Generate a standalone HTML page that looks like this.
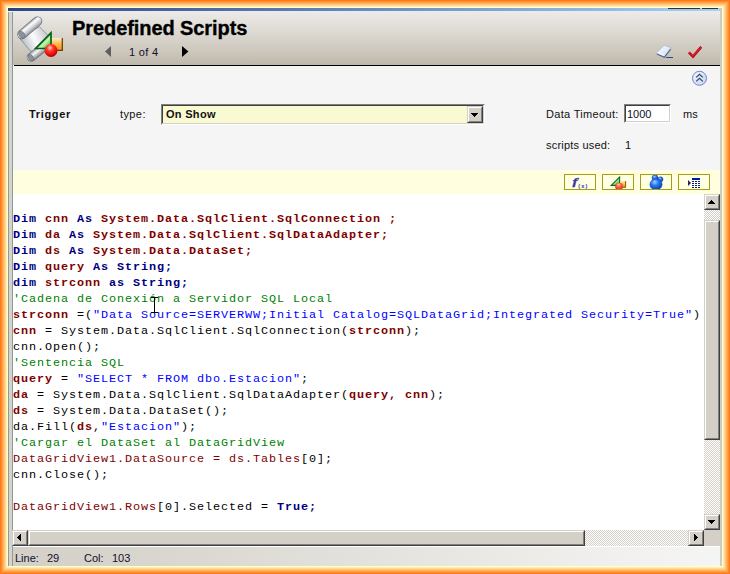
<!DOCTYPE html>
<html>
<head>
<meta charset="utf-8">
<title>Predefined Scripts</title>
<style>
html,body{margin:0;padding:0;}
body{width:730px;height:574px;overflow:hidden;position:relative;background:#f5f5f5;font-family:"Liberation Sans",sans-serif;font-size:11px;color:#000;}
.abs{position:absolute;}
/* glow frame */
.g{position:absolute;}
.gt{left:0;top:0;width:730px;height:8px;background:linear-gradient(to bottom,#ff7a16 0.5px,#ffffc8 7.5px);}
.gb{left:0;top:566px;width:730px;height:8px;background:linear-gradient(to top,#ff7a16 0.5px,#ffffc8 7.5px);}
.gl{left:0;top:0;width:8px;height:574px;background:linear-gradient(to right,#ff7a16 0.5px,#ffffc8 7.5px);clip-path:polygon(0 0,8px 8px,8px 566px,0 574px);}
.gr{left:722px;top:0;width:8px;height:574px;background:linear-gradient(to left,#ff7a16 0.5px,#ffffc8 7.5px);clip-path:polygon(8px 0,0 8px,0 566px,8px 574px);}
/* window chrome */
#topbar{left:8px;top:8px;width:712px;height:3px;background:linear-gradient(to right,#2a4488,#a8cff8);}
#lstrip{left:8px;top:12px;width:3px;height:554px;background:#d6d3cd;border-left:1px solid #8d9a9c;border-right:1px solid #8d9a9c;}
#rstrip{left:720px;top:8px;width:2px;height:558px;background:#cfccc5;}
#hdr{left:13px;top:11px;width:707px;height:54px;background:linear-gradient(to bottom,#edebe8 0%,#d8d4cc 50%,#c0b9ac 100%);}
#hline{left:14px;top:65px;width:706px;height:1px;background:#000;}
#title{left:72px;top:16px;letter-spacing:-0.08px;-webkit-text-stroke:0.35px #000;font-weight:bold;font-size:20px;line-height:24px;white-space:nowrap;color:#000;}
#pager{left:129px;top:46px;letter-spacing:0.3px;line-height:13px;white-space:nowrap;color:#10102a;}
.lbl{position:absolute;line-height:13px;white-space:nowrap;color:#111;}
#ystrip{left:13px;top:170px;width:707px;height:24px;background:#ffffe0;}
.tb{position:absolute;top:174px;width:30px;height:14px;border:1px solid #a39d18;background:#ffffe4;}
/* combo + input */
#combo{left:161px;top:104px;width:320px;height:17px;background:#fafad2;border-top:2px solid #404040;border-left:2px solid #404040;border-right:2px solid #fff;border-bottom:2px solid #fff;}
#combo:before{content:"";position:absolute;left:-2px;top:-2px;width:322px;height:19px;border-top:1px solid #808080;border-left:1px solid #808080;border-right:1px solid #fff;border-bottom:1px solid #fff;}
#combo:after{content:"";position:absolute;left:-1px;top:-1px;width:321px;height:18px;border-right:1px solid #d4d0c8;border-bottom:1px solid #d4d0c8;}
#cbtn{left:468px;top:106px;width:11px;height:13px;background:#d4d0c8;border-top:1px solid #fff;border-left:1px solid #fff;border-right:1px solid #808080;border-bottom:1px solid #808080;box-shadow:1px 1px 0 #404040;}
#inp{left:624px;top:104px;width:43px;height:15px;background:#fff;border-top:2px solid #404040;border-left:2px solid #404040;border-right:2px solid #d4d0c8;border-bottom:2px solid #d4d0c8;box-shadow:-0px -0px 0 #808080;}
#inp:before{content:"";position:absolute;left:-2px;top:-2px;width:45px;height:17px;border-top:1px solid #808080;border-left:1px solid #808080;border-right:1px solid #fff;border-bottom:1px solid #fff;}
/* code */
#code{left:13px;top:194px;width:691px;height:336px;background:#fff;overflow:hidden;}
#code pre{margin:0;position:absolute;left:0;top:17px;font-family:"Liberation Mono",monospace;font-size:11.8px;letter-spacing:0.92px;line-height:16px;color:#000;white-space:pre;}
.k{color:#000080;font-weight:bold;}
.v{color:#800000;font-weight:bold;}
.m{color:#800000;}
.c{color:#008000;}
.s{color:#0000ff;}
/* scrollbars */
.dither{background-color:#fff;background-image:conic-gradient(#d4d0c8 25%,#fff 0 50%,#d4d0c8 0 75%,#fff 0);background-size:2px 2px;}
.btn3d{position:absolute;background:#d4d0c8;box-sizing:border-box;border-top:1px solid #d4d0c8;border-left:1px solid #d4d0c8;border-right:1px solid #404040;border-bottom:1px solid #404040;}
.btn3d:before{content:"";position:absolute;left:0;top:0;right:0;bottom:0;border-top:1px solid #fff;border-left:1px solid #fff;border-right:1px solid #808080;border-bottom:1px solid #808080;}
#vs{left:704px;top:194px;width:16px;height:336px;}
#hs{left:13px;top:530px;width:691px;height:16px;}
#corner{left:704px;top:530px;width:16px;height:16px;background:#d4d0c8;}
#status{left:13px;top:546px;width:707px;height:20px;background:linear-gradient(to right,#d4d0c8 0%,#d9d6cf 20%,#e6e4df 55%,#f1f0ee 85%,#f5f5f4 100%);}
#status:before{content:"";position:absolute;left:0;top:0;width:100%;height:1px;background:#fff;}
</style>
</head>
<body>
<div class="abs" id="topbar"></div>
<div class="abs" style="left:668px;top:8px;width:32px;height:1px;background:#333"></div>
<div class="abs" style="left:702px;top:8px;width:16px;height:1px;background:#333"></div>
<div class="abs" id="lstrip"></div>
<div class="abs" id="rstrip"></div>
<div class="abs" id="hdr"></div>
<div class="abs" id="hline"></div>

<div class="abs" id="title">Predefined Scripts</div>
<div class="abs" id="pager">1 of 4</div>

<div class="lbl" style="left:29px;top:108px;font-weight:bold;letter-spacing:0.65px">Trigger</div>
<div class="lbl" style="left:120px;top:108px;letter-spacing:0.4px">type:</div>
<div class="abs" id="combo"></div>
<div class="btn3d" style="left:467px;top:106px;width:16px;height:17px"></div>
<div class="lbl" style="left:166px;top:108px;font-weight:bold;letter-spacing:0.3px">On Show</div>
<div class="lbl" style="left:546px;top:108px;letter-spacing:0.32px">Data Timeout:</div>
<div class="abs" id="inp"></div>
<div class="lbl" style="left:627px;top:108px;color:#10102a">1000</div>
<div class="lbl" style="left:683px;top:108px">ms</div>
<div class="lbl" style="left:546px;top:139px;letter-spacing:0.2px">scripts used:</div>
<div class="lbl" style="left:625px;top:139px">1</div>

<div class="abs" id="ystrip"></div>
<div class="tb" style="left:564px"></div>
<div class="tb" style="left:602px"></div>
<div class="tb" style="left:640px"></div>
<div class="tb" style="left:678px"></div>

<div class="abs" id="code"><pre><span class="k">Dim</span> <span class="v">cnn</span> <span class="k">As</span> <span class="v">System.Data.SqlClient.SqlConnection ;</span>
<span class="k">Dim</span> <span class="v">da</span> <span class="k">As</span> <span class="v">System.Data.SqlClient.SqlDataAdapter;</span>
<span class="k">Dim</span> <span class="v">ds</span> <span class="k">As</span> <span class="v">System.Data.DataSet;</span>
<span class="k">Dim</span> <span class="v">query</span> <span class="k">As String;</span>
<span class="k">dim</span> <span class="v">strconn</span> <span class="k">as String;</span>
<span class="c">'Cadena de Conexión a Servidor SQL Local</span>
<span class="v">strconn</span> =(<span class="s">"Data Source=SERVERWW;Initial Catalog=SQLDataGrid;Integrated Security=True"</span>)
<span class="v">cnn</span> = System.Data.SqlClient.SqlConnection(<span class="v">strconn</span>);
cnn.Open();
<span class="c">'Sentencia SQL</span>
<span class="v">query</span> = <span class="s">"SELECT * FROM dbo.Estacion"</span>;
<span class="v">da</span> = System.Data.SqlClient.SqlDataAdapter(<span class="v">query, cnn</span>);
<span class="v">ds</span> = System.Data.DataSet();
da.Fill(<span class="v">ds</span>,<span class="s">"Estacion"</span>);
<span class="c">'Cargar el DataSet al DataGridView</span>
<span class="m">DataGridView1.DataSource = ds.Tables</span>[0];
cnn.Close();

<span class="m">DataGridView1.Rows</span>[0].Selected = <span class="k">True;</span></pre></div>

<div class="abs dither" id="vs"></div>
<div class="abs dither" id="hs"></div>
<div class="abs" id="corner"></div>
<div class="btn3d" style="left:704px;top:194px;width:16px;height:16px"></div>
<div class="btn3d" style="left:704px;top:220px;width:16px;height:220px"></div>
<div class="btn3d" style="left:704px;top:514px;width:16px;height:16px"></div>
<div class="btn3d" style="left:12px;top:530px;width:16px;height:16px"></div>
<div class="btn3d" style="left:28px;top:530px;width:557px;height:16px"></div>
<div class="btn3d" style="left:688px;top:530px;width:16px;height:16px"></div>

<div class="abs" id="status"></div>
<div class="lbl" style="left:15px;top:552px;color:#10102a">Line:</div>
<div class="lbl" style="left:47px;top:552px;color:#10102a">29</div>
<div class="lbl" style="left:84px;top:552px;color:#10102a">Col:</div>
<div class="lbl" style="left:112px;top:552px;color:#10102a">103</div>


<svg class="abs" style="left:0;top:0" width="730" height="574" viewBox="0 0 730 574">
<defs>
<linearGradient id="roll" gradientUnits="userSpaceOnUse" x1="26" y1="23.5" x2="33.5" y2="32.5"><stop offset="0" stop-color="#6e737c"/><stop offset="0.32" stop-color="#ffffff"/><stop offset="0.65" stop-color="#c3c7ce"/><stop offset="1" stop-color="#656a73"/></linearGradient>
<linearGradient id="sheet" gradientUnits="userSpaceOnUse" x1="21" y1="43" x2="46" y2="31"><stop offset="0" stop-color="#7d828b"/><stop offset="0.12" stop-color="#c4c8cf"/><stop offset="0.5" stop-color="#fafbfc"/><stop offset="1" stop-color="#c6c9cf"/></linearGradient>
<linearGradient id="roll2" gradientUnits="userSpaceOnUse" x1="33.2" y1="49.2" x2="39.5" y2="57.3"><stop offset="0" stop-color="#80858e"/><stop offset="0.4" stop-color="#f6f7f9"/><stop offset="1" stop-color="#666b74"/></linearGradient>
<linearGradient id="tri" x1="0" y1="0" x2="1" y2="1"><stop offset="0.3" stop-color="#1fae1f"/><stop offset="0.62" stop-color="#c9f5c0"/><stop offset="0.8" stop-color="#5fd455"/><stop offset="1" stop-color="#22a822"/></linearGradient>
<linearGradient id="org" x1="0" y1="0" x2="0" y2="1"><stop offset="0" stop-color="#ffeec8"/><stop offset="0.5" stop-color="#ffb84a"/><stop offset="1" stop-color="#ff8f0c"/></linearGradient>
<radialGradient id="red" cx="0.42" cy="0.3" r="0.7"><stop offset="0" stop-color="#ffd0c8"/><stop offset="0.35" stop-color="#ff3a30"/><stop offset="0.8" stop-color="#e00808"/><stop offset="1" stop-color="#a00000"/></radialGradient>
<radialGradient id="blu" cx="0.4" cy="0.3" r="0.75"><stop offset="0" stop-color="#9fd0ff"/><stop offset="0.4" stop-color="#2a78f0"/><stop offset="0.85" stop-color="#0a48c8"/><stop offset="1" stop-color="#062a90"/></radialGradient>
<linearGradient id="era" x1="0" y1="0" x2="1" y2="1"><stop offset="0" stop-color="#ffffff"/><stop offset="0.6" stop-color="#dfe8f6"/><stop offset="1" stop-color="#a9bbd8"/></linearGradient>
<linearGradient id="cir" x1="0" y1="0" x2="1" y2="1"><stop offset="0" stop-color="#f2f5fe"/><stop offset="1" stop-color="#c3d2f3"/></linearGradient>
<radialGradient id="red2" cx="0.45" cy="0.25" r="0.75"><stop offset="0" stop-color="#ffc9b8"/><stop offset="0.45" stop-color="#ff6044"/><stop offset="1" stop-color="#e8301c"/></radialGradient>
<linearGradient id="tri2" x1="0.2" y1="0.2" x2="1" y2="1"><stop offset="0" stop-color="#e6fae0"/><stop offset="1" stop-color="#4cc848"/></linearGradient>
</defs>
<!-- header scroll icon -->
<polygon points="18.4,37 39.5,26.8 50.5,38 51,49 42,52 30.4,51" fill="url(#sheet)" stroke="#7d828b" stroke-width="0.7"/>
<line x1="31.2" y1="57.2" x2="42" y2="48.8" stroke="#666b74" stroke-width="8.8" stroke-linecap="round"/>
<line x1="31.2" y1="57.2" x2="42" y2="48.8" stroke="url(#roll2)" stroke-width="7.6" stroke-linecap="round"/>
<ellipse cx="30.8" cy="57.5" rx="2.3" ry="3.7" transform="rotate(-38 30.8 57.5)" fill="#8b9099" stroke="#5f646d" stroke-width="0.5"/>
<line x1="22.1" y1="34.4" x2="37.5" y2="21.2" stroke="#666b74" stroke-width="9.6" stroke-linecap="round"/>
<line x1="22.1" y1="34.4" x2="37.5" y2="21.2" stroke="url(#roll)" stroke-width="8.4" stroke-linecap="round"/>
<ellipse cx="21.8" cy="34.7" rx="2.7" ry="4.1" transform="rotate(-40 21.8 34.7)" fill="#8d929b" stroke="#5f646d" stroke-width="0.5"/>
<rect x="51" y="38" width="11.5" height="12" fill="url(#org)"/>
<path d="M62.3 38V50.3H51" fill="none" stroke="#6e3f0c" stroke-width="1.3"/>
<polygon points="51,32.8 51,48.5 35.6,48.5" fill="url(#tri)" stroke="#096010" stroke-width="1.7" stroke-linejoin="miter"/>
<circle cx="51" cy="50.5" r="6.5" fill="url(#red)"/>
<!-- pager arrows -->
<polygon points="105,51.5 111,46 111,57" fill="#5f5f5f"/>
<polygon points="188.4,51.5 182,46 182,57" fill="#000"/>
<!-- eraser -->
<polygon points="664.3,45.3 670.6,47.4 670.6,49.2 664.4,57.4 656.9,54.2 657.2,52.2" fill="url(#era)" stroke="#8ea2c4" stroke-width="0.5"/>
<path d="M657 54.1 L664.4 57.3 L670.6 49.1" fill="none" stroke="#4d648f" stroke-width="1.1"/>
<path d="M657.6 52.4 L664.3 55.2" fill="none" stroke="#ffffff" stroke-width="0.9"/>
<rect x="666" y="57" width="7" height="1" fill="#2d4a7c"/>
<!-- check -->
<path d="M688.9 52.3 L693 56.6 L701.2 46.8" fill="none" stroke="#a60a18" stroke-width="2.6" stroke-linejoin="miter"/>
<path d="M689.2 52.2 L693 56 L701 46.9" fill="none" stroke="#e8162a" stroke-width="1.5" stroke-linejoin="miter"/>
<!-- collapse circle -->
<circle cx="699.5" cy="78.3" r="7" fill="url(#cir)" stroke="#6f86cb" stroke-width="1"/>
<path d="M696.2 77.4 L699.5 74.3 L702.8 77.4 M696.2 81.4 L699.5 78.3 L702.8 81.4" fill="none" stroke="#3c4b66" stroke-width="1.3"/>
<!-- toolbar: f(x) -->
<text transform="translate(572.6 184.6) scale(1.45 0.98)" font-family="Liberation Serif, serif" font-weight="bold" font-style="italic" font-size="10.5" fill="#3a35a5" stroke="#3a35a5" stroke-width="0.3">f</text>
<text x="578.3" y="187.5" font-family="Liberation Sans, sans-serif" font-weight="bold" font-size="5.6" letter-spacing="1.1" fill="#3a35a5">(x)</text>
<!-- toolbar: shapes -->
<rect x="621" y="181" width="5" height="6.5" fill="url(#org)"/>
<path d="M625.6 181V187.3H621" fill="none" stroke="#7e4c12" stroke-width="0.9"/>
<polygon points="619.6,177 619.6,185.4 611.2,185.4" fill="url(#tri2)" stroke="#0b6d10" stroke-width="1.1"/>
<clipPath id="c2"><rect x="603" y="175" width="30" height="14"/></clipPath>
<circle cx="619" cy="186.4" r="3.7" fill="url(#red2)" stroke="#c8341c" stroke-width="0.4" clip-path="url(#c2)"/>
<!-- toolbar: blue blobs -->
<clipPath id="c3"><rect x="641" y="175" width="30" height="14"/></clipPath>
<g clip-path="url(#c3)">
<circle cx="660.5" cy="179.3" r="2.5" fill="url(#blu)" stroke="#0a35a0" stroke-width="0.5"/>
<circle cx="655" cy="177.8" r="3" fill="url(#blu)" stroke="#0a35a0" stroke-width="0.5"/>
<ellipse cx="656" cy="184.4" rx="6.1" ry="5.6" fill="url(#blu)" stroke="#0a35a0" stroke-width="0.5"/>
</g>
<!-- toolbar: table -->
<polygon points="688,180 688,186 691,183" fill="#2a2060"/>
<rect x="692" y="178" width="8" height="2" fill="#00189a"/>
<g fill="#00189a">
<rect x="692" y="181" width="2" height="1"/><rect x="695" y="181" width="2" height="1"/><rect x="698" y="181" width="2" height="1"/>
<rect x="692" y="183" width="2" height="1"/><rect x="695" y="183" width="2" height="1"/><rect x="698" y="183" width="2" height="1"/>
<rect x="692" y="185" width="2" height="1"/><rect x="695" y="185" width="2" height="1"/><rect x="698" y="185" width="2" height="1"/>
<rect x="692" y="187" width="2" height="1"/><rect x="695" y="187" width="2" height="1"/><rect x="698" y="187" width="2" height="1"/>
</g>
<!-- scrollbar + combo arrows -->
<g fill="#000" shape-rendering="crispEdges">
<rect x="711" y="200" width="1" height="1"/><rect x="710" y="201" width="3" height="1"/><rect x="709" y="202" width="5" height="1"/><rect x="708" y="203" width="7" height="1"/>
<rect x="708" y="520" width="7" height="1"/><rect x="709" y="521" width="5" height="1"/><rect x="710" y="522" width="3" height="1"/><rect x="711" y="523" width="1" height="1"/>
<rect x="694" y="534" width="1" height="7"/><rect x="695" y="535" width="1" height="5"/><rect x="696" y="536" width="1" height="3"/><rect x="697" y="537" width="1" height="1"/>
<rect x="17" y="537" width="1" height="1"/><rect x="18" y="536" width="1" height="3"/><rect x="19" y="535" width="1" height="5"/><rect x="20" y="534" width="1" height="7"/>
<rect x="471" y="113" width="7" height="1"/><rect x="472" y="114" width="5" height="1"/><rect x="473" y="115" width="3" height="1"/><rect x="474" y="116" width="1" height="1"/>
</g>
<!-- I-beam cursor -->
<path d="M151 297.5h3 M155 297.5h3 M154.5 297v16 M151 312.5h3 M155 312.5h3" stroke="#000" stroke-width="1" fill="none" shape-rendering="crispEdges"/>
</svg>
<div class="g gt"></div><div class="g gb"></div><div class="g gl"></div><div class="g gr"></div>
</body>
</html>
